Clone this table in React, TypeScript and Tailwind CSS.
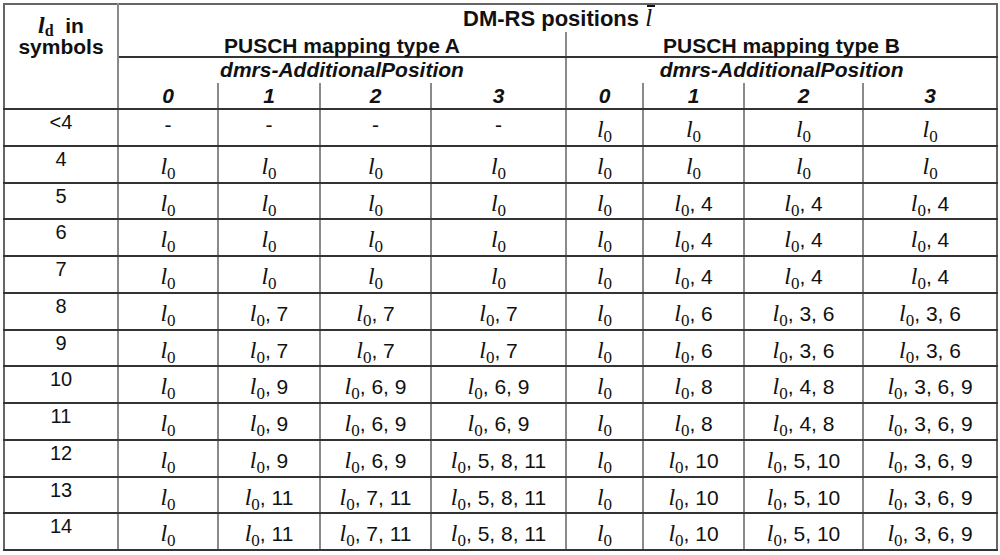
import React from "react";

type Cell = string | null;

const rows: { n: string; a: Cell[]; b: Cell[] }[] = [
  { n: "<4", a: [null, null, null, null], b: ["", "", "", ""] },
  { n: "4", a: ["", "", "", ""], b: ["", "", "", ""] },
  { n: "5", a: ["", "", "", ""], b: ["", ", 4", ", 4", ", 4"] },
  { n: "6", a: ["", "", "", ""], b: ["", ", 4", ", 4", ", 4"] },
  { n: "7", a: ["", "", "", ""], b: ["", ", 4", ", 4", ", 4"] },
  { n: "8", a: ["", ", 7", ", 7", ", 7"], b: ["", ", 6", ", 3, 6", ", 3, 6"] },
  { n: "9", a: ["", ", 7", ", 7", ", 7"], b: ["", ", 6", ", 3, 6", ", 3, 6"] },
  { n: "10", a: ["", ", 9", ", 6, 9", ", 6, 9"], b: ["", ", 8", ", 4, 8", ", 3, 6, 9"] },
  { n: "11", a: ["", ", 9", ", 6, 9", ", 6, 9"], b: ["", ", 8", ", 4, 8", ", 3, 6, 9"] },
  { n: "12", a: ["", ", 9", ", 6, 9", ", 5, 8, 11"], b: ["", ", 10", ", 5, 10", ", 3, 6, 9"] },
  { n: "13", a: ["", ", 11", ", 7, 11", ", 5, 8, 11"], b: ["", ", 10", ", 5, 10", ", 3, 6, 9"] },
  { n: "14", a: ["", ", 11", ", 7, 11", ", 5, 8, 11"], b: ["", ", 10", ", 5, 10", ", 3, 6, 9"] },
];

function L0() {
  return (
    <span className="font-['Liberation_Serif',serif] whitespace-nowrap">
      <span className="italic text-[24px]">l</span>
      <span className="text-[17px] relative top-[5px]">0</span>
    </span>
  );
}

function DataCell({ v, last }: { v: Cell; last?: boolean }) {
  return (
    <td
      className={
        "text-center align-top leading-[22px] text-[21px] border-t-2 border-b-2 border-t-[#333] border-b-[#333] border-l-2 border-l-[#8a8a8a] whitespace-nowrap " +
        (v === null ? "pt-[4px] " : "pt-[8px] ") +
        (last ? "border-r-2 border-r-[#666]" : "border-r-2 border-r-[#8a8a8a]")
      }
    >
      {v === null ? "-" : (
        <>
          <L0 />
          {v}
        </>
      )}
    </td>
  );
}

export default function App() {
  const hdr = "font-bold text-[21px] text-center leading-[20px]";
  return (
    <div className="w-[1000px] h-[555px] bg-white pt-[3px] pl-[3px] font-['Liberation_Sans',Arial,sans-serif] text-[20px] text-[#111]">
      <table className="table-fixed border-collapse w-[993px] border-2 border-[#666]">
        <colgroup>
          <col className="w-[114px]" />
          <col className="w-[100px]" />
          <col className="w-[102px]" />
          <col className="w-[111px]" />
          <col className="w-[135px]" />
          <col className="w-[77px]" />
          <col className="w-[101px]" />
          <col className="w-[119px]" />
          <col className="w-[134px]" />
        </colgroup>
        <thead>
          <tr className="h-[28px]">
            <td
              rowSpan={4}
              className="align-top text-center font-bold text-[21px] leading-[21px] pt-[10px] border-2 border-[#666] border-b-[#333] border-r-[#8a8a8a]"
            >
              <div className="whitespace-nowrap h-[21px]">
                <span className="font-['Liberation_Serif',serif] italic text-[24px]">l</span>
                <span className="font-['Liberation_Serif',serif] text-[16px] relative top-[3px]">d</span>
                <span>&nbsp; in</span>
              </div>
              <div>symbols</div>
            </td>
            <td colSpan={8} className={hdr + " text-[22px] align-bottom pb-[3px] border-t-2 border-t-[#666]"}>
              DM-RS positions{" "}
              <span className="relative inline-block font-['Liberation_Serif',serif] italic font-normal text-[25px] leading-[20px]">
                l
                <span className="absolute left-[2px] top-[-3px] w-[8px] h-[1.5px] bg-[#111]" />
              </span>
            </td>
          </tr>
          <tr className="h-[25px]">
            <td colSpan={4} className={hdr + " align-bottom border-b-2 border-b-[#333] border-r-2 border-r-[#8a8a8a]"}>
              PUSCH mapping type A
            </td>
            <td colSpan={4} className={hdr + " align-bottom border-b-2 border-b-[#333] border-l-2 border-l-[#8a8a8a]"}>
              PUSCH mapping type B
            </td>
          </tr>
          <tr className="h-[26px]">
            <td colSpan={4} className={hdr + " italic align-top pt-[2px] border-r-2 border-r-[#8a8a8a]"}>
              dmrs-AdditionalPosition
            </td>
            <td colSpan={4} className={hdr + " italic align-top pt-[2px] border-l-2 border-l-[#8a8a8a]"}>
              dmrs-AdditionalPosition
            </td>
          </tr>
          <tr className="h-[26px]">
            {["0", "1", "2", "3", "0", "1", "2", "3"].map((d, i) => (
              <td
                key={i}
                className={
                  hdr +
                  " italic align-middle border-b-2 border-b-[#333] border-l-2 border-l-[#8a8a8a] " +
                  (i === 7 ? "border-r-2 border-r-[#666]" : "border-r-2 border-r-[#8a8a8a]")
                }
              >
                {d}
              </td>
            ))}
          </tr>
        </thead>
        <tbody>
          {rows.map((r) => (
            <tr key={r.n} className="h-[36.75px]">
              <td className="text-center align-top pt-[2px] leading-[20px] border-2 border-[#333] border-l-[#666] border-r-[#8a8a8a]">
                {r.n}
              </td>
              {r.a.map((v, i) => (
                <DataCell key={"a" + i} v={v} />
              ))}
              {r.b.map((v, i) => (
                <DataCell key={"b" + i} v={v} last={i === 3} />
              ))}
            </tr>
          ))}
        </tbody>
      </table>
    </div>
  );
}
